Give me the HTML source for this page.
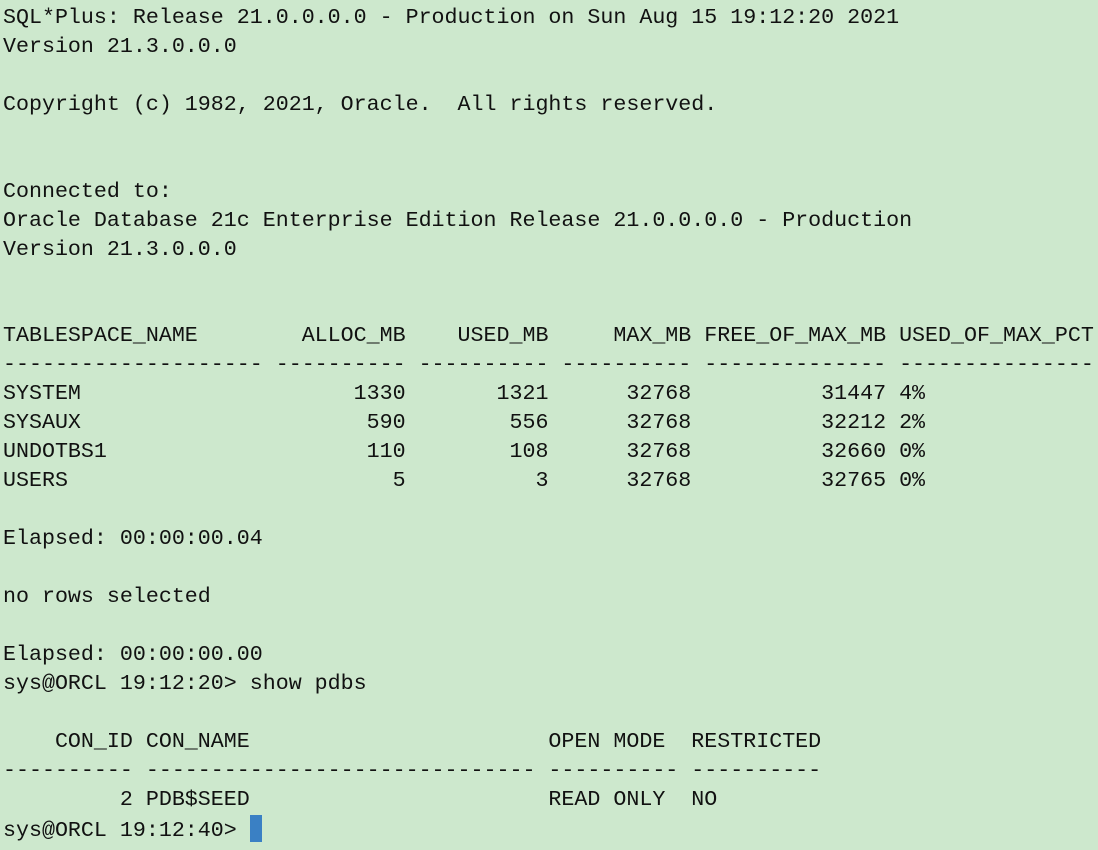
<!DOCTYPE html>
<html><head><meta charset="utf-8"><style>
html,body{margin:0;padding:0;background:#cde8cd;width:1098px;height:850px;overflow:hidden}
pre{margin:0;position:absolute;left:3px;top:4px;font-family:"Liberation Mono","DejaVu Sans Mono",monospace;font-size:21.65px;line-height:28.95px;color:#111;white-space:pre}
.cur{display:inline-block;width:12px;height:27px;background:#3a80c4;vertical-align:-6px}
</style></head><body><pre>SQL*Plus: Release 21.0.0.0.0 - Production on Sun Aug 15 19:12:20 2021
Version 21.3.0.0.0

Copyright (c) 1982, 2021, Oracle.  All rights reserved.


Connected to:
Oracle Database 21c Enterprise Edition Release 21.0.0.0.0 - Production
Version 21.3.0.0.0


TABLESPACE_NAME        ALLOC_MB    USED_MB     MAX_MB FREE_OF_MAX_MB USED_OF_MAX_PCT
-------------------- ---------- ---------- ---------- -------------- ---------------
SYSTEM                     1330       1321      32768          31447 4%
SYSAUX                      590        556      32768          32212 2%
UNDOTBS1                    110        108      32768          32660 0%
USERS                         5          3      32768          32765 0%

Elapsed: 00:00:00.04

no rows selected

Elapsed: 00:00:00.00
sys@ORCL 19:12:20&gt; show pdbs

    CON_ID CON_NAME                       OPEN MODE  RESTRICTED
---------- ------------------------------ ---------- ----------
         2 PDB$SEED                       READ ONLY  NO
sys@ORCL 19:12:40&gt; <span class="cur"></span></pre></body></html>
